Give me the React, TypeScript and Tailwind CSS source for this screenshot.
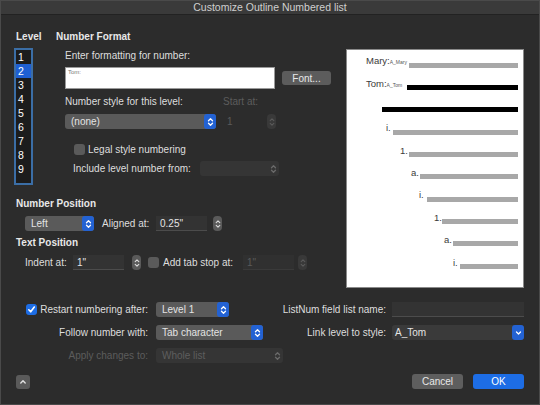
import React from "react";

function Arrows({ className = "" }: { className?: string }) {
  return (
    <svg width="7" height="10" viewBox="0 0 7 10" fill="none" stroke="currentColor" strokeWidth="1.3" strokeLinecap="round" strokeLinejoin="round" className={className}>
      <path d="M1.5 3.8 L3.5 1.8 L5.5 3.8" />
      <path d="M1.5 6.2 L3.5 8.2 L5.5 6.2" />
    </svg>
  );
}

function Popup({ label, w, disabled }: { label: string; w: string; disabled?: boolean }) {
  return (
    <div
      className={`${w} h-[15px] rounded-[3px] flex items-center justify-between shrink-0 ${
        disabled ? "bg-[#353535] text-[#5e5e5e]" : "bg-[#5a5a5a] text-[#e4e4e4]"
      }`}
    >
      <span className="pl-[6px] leading-none">{label}</span>
      {disabled ? (
        <div className="w-[12px] h-full flex items-center justify-center text-[#6a6a6a]">
          <Arrows />
        </div>
      ) : (
        <div className="w-[12px] h-full rounded-[3px] bg-[#2362d3] flex items-center justify-center text-white">
          <Arrows />
        </div>
      )}
    </div>
  );
}

function Stepper({ disabled }: { disabled?: boolean }) {
  return (
    <div
      className={`w-[9px] h-[15px] rounded-[4px] flex items-center justify-center shrink-0 ${
        disabled ? "bg-[#393939] text-[#5a5a5a]" : "bg-[#5a5a5a] text-[#dcdcdc]"
      }`}
    >
      <svg width="6" height="10" viewBox="0 0 6 10" fill="none" stroke="currentColor" strokeWidth="1.1" strokeLinecap="round" strokeLinejoin="round">
        <path d="M1.2 3.6 L3 1.8 L4.8 3.6" />
        <path d="M1.2 6.4 L3 8.2 L4.8 6.4" />
      </svg>
    </div>
  );
}

function Field({ value, w, disabled }: { value: string; w: string; disabled?: boolean }) {
  return (
    <div
      className={`${w} h-[15px] flex items-center pl-[4px] shrink-0 border-b ${
        disabled ? "bg-[#303030] border-[#3a3a3a] text-[#5a5a5a]" : "bg-[#333333] border-[#4c4c4c] text-[#e4e4e4]"
      }`}
    >
      {value}
    </div>
  );
}

function Checkbox({ checked }: { checked?: boolean }) {
  return checked ? (
    <div className="w-[11px] h-[11px] rounded-[3px] bg-[#1d6de5] flex items-center justify-center shrink-0">
      <svg width="9" height="9" viewBox="0 0 9 9" fill="none" stroke="white" strokeWidth="1.6" strokeLinecap="round" strokeLinejoin="round">
        <path d="M1.8 4.8 L3.7 6.8 L7.3 2" />
      </svg>
    </div>
  ) : (
    <div className="w-[11px] h-[11px] rounded-[3px] bg-[#5a5a5a] shrink-0" />
  );
}

const preview = [
  { pl: 19, tw: 43, text: "Mary:", sub: "A_Mary", black: false },
  { pl: 19, tw: 41, text: "Tom:", sub: "A_Tom", black: true },
  { pl: 35, tw: 0, text: "", sub: "", black: true },
  { pl: 39, tw: 7, text: "i.", sub: "", black: false },
  { pl: 53, tw: 9, text: "1.", sub: "", black: false },
  { pl: 64, tw: 9, text: "a.", sub: "", black: false },
  { pl: 72, tw: 8, text: "i.", sub: "", black: false },
  { pl: 87, tw: 8, text: "1.", sub: "", black: false },
  { pl: 97, tw: 9, text: "a.", sub: "", black: false },
  { pl: 106, tw: 7, text: "i.", sub: "", black: false },
];

export default function App() {
  return (
    <div className="w-[540px] h-[405px] bg-[#2c2c2c] border border-[#4a4a4a] text-[10px] text-[#dedede] font-['Liberation_Sans',Arial,sans-serif] antialiased overflow-hidden select-none">
      {/* Title bar */}
      <div className="h-[14px] bg-[#3a3a3a] border-b border-[#222] flex items-center justify-center text-[10.5px] text-[#cfcfcf]">
        Customize Outline Numbered list
      </div>

      {/* Top section */}
      <div className="flex pt-[16px] pr-[15px]">
        <div className="flex-1 pl-[13px]">
          <div className="flex">
            {/* Level */}
            <div className="w-[42px]">
              <div className="h-[12px] leading-[12px] font-bold text-[#e8e8e8] pl-[2px]">Level</div>
              <div className="mt-[5px] w-[19px] h-[137px] border-2 border-[#3b6ea6] bg-[#1c1c1c] text-[10.5px] text-white">
                {[1, 2, 3, 4, 5, 6, 7, 8, 9].map((n) => (
                  <div key={n} className={`h-[14px] leading-[14px] pl-[2px] ${n === 2 ? "bg-[#1f5fd2]" : ""}`}>
                    {n}
                  </div>
                ))}
              </div>
            </div>

            {/* Number Format */}
            <div className="flex-1">
              <div className="h-[12px] leading-[12px] font-bold text-[#e8e8e8]">Number Format</div>
              <div className="pl-[9px]">
                <div className="mt-[7px] h-[12px] leading-[12px]">Enter formatting for number:</div>
                <div className="mt-[5px] flex items-center">
                  <div className="w-[210px] h-[22px] bg-white border border-[#9a9a9a] text-[6px] text-[#777] pl-[2px] pt-[1px] leading-none">
                    Tom:
                  </div>
                  <div className="ml-[7px] w-[49px] h-[14px] rounded-[3px] bg-[#5c5c5c] text-[#e8e8e8] flex items-center justify-center">
                    Font...
                  </div>
                </div>
                <div className="mt-[7px] h-[12px] leading-[12px] flex">
                  <span className="w-[158px]">Number style for this level:</span>
                  <span className="text-[#5c5c5c]">Start at:</span>
                </div>
                <div className="mt-[6px] h-[15px] flex items-center">
                  <Popup label="(none)" w="w-[151px]" />
                  <div className="ml-[8px] w-[43px] h-[15px] pl-[3px] flex items-center text-[#5a5a5a]">1</div>
                  <Stepper disabled />
                </div>
                <div className="mt-[14px] h-[12px] flex items-center pl-[9px]">
                  <Checkbox />
                  <span className="ml-[3px]">Legal style numbering</span>
                </div>
                <div className="mt-[6px] h-[15px] flex items-center pl-[8px]">
                  <span className="w-[127px]">Include level number from:</span>
                  <Popup label="" w="w-[79px]" disabled />
                </div>
              </div>
            </div>
          </div>

          {/* Number Position */}
          <div className="mt-[13px] h-[12px] leading-[12px] font-bold text-[#e8e8e8] pl-[2px]">Number Position</div>
          <div className="mt-[6px] h-[15px] flex items-center pl-[11px]">
            <Popup label="Left" w="w-[69px]" />
            <span className="ml-[8px] w-[54px]">Aligned at:</span>
            <Field value={'0.25"'} w="w-[51px]" />
            <div className="ml-[6px]">
              <Stepper />
            </div>
          </div>

          {/* Text Position */}
          <div className="mt-[6px] h-[12px] leading-[12px] font-bold text-[#e8e8e8] pl-[2px]">Text Position</div>
          <div className="mt-[6px] h-[15px] flex items-center pl-[11px]">
            <span className="w-[48px]">Indent at:</span>
            <Field value={'1"'} w="w-[51px]" />
            <div className="ml-[8px]">
              <Stepper />
            </div>
            <div className="ml-[7px]">
              <Checkbox />
            </div>
            <span className="ml-[4px] w-[80px]">Add tab stop at:</span>
            <Field value={'1"'} w="w-[51px]" disabled />
            <div className="ml-[4px]">
              <Stepper disabled />
            </div>
          </div>
        </div>

        {/* Preview */}
        <div className="mt-[18px] w-[178px] h-[239px] bg-white border border-[#8a8a8a] pt-[4px] pr-[5px]">
          {preview.map((r, i) => (
            <div key={i} className="h-[22.35px] flex items-center" style={{ paddingLeft: r.pl }}>
              {r.tw > 0 && (
                <span
                  className="shrink-0 mb-[8px] text-[9.5px] leading-none text-[#3a3a3a] whitespace-nowrap"
                  style={{ width: r.tw }}
                >
                  {r.text}
                  {r.sub && <span className="text-[5px] text-[#555]">{r.sub}</span>}
                </span>
              )}
              <div className={`flex-1 ${r.black ? "h-[5px] bg-black" : "h-[5px] bg-[#a8a8a8]"}`} />
            </div>
          ))}
        </div>
      </div>

      {/* Bottom options */}
      <div className="mt-[14px] flex flex-col gap-[8px] pr-[15px]">
        <div className="h-[15px] flex items-center justify-between">
          <div className="flex items-center">
            <div className="w-[147px] flex items-center justify-end">
              <Checkbox checked />
              <span className="ml-[3px]">Restart numbering after:</span>
            </div>
            <div className="ml-[8px]">
              <Popup label="Level 1" w="w-[73px]" />
            </div>
          </div>
          <div className="flex items-center">
            <span>ListNum field list name:</span>
            <div className="ml-[6px] w-[132px] h-[15px] bg-[#333333] border-b border-[#4c4c4c]" />
          </div>
        </div>
        <div className="h-[15px] flex items-center justify-between">
          <div className="flex items-center">
            <div className="w-[147px] text-right">Follow number with:</div>
            <div className="ml-[8px]">
              <Popup label="Tab character" w="w-[107px]" />
            </div>
          </div>
          <div className="flex items-center">
            <span>Link level to style:</span>
            <div className="ml-[6px] w-[132px] h-[15px] rounded-[3px] bg-[#3a3a3a] flex items-center justify-between text-[#e4e4e4]">
              <span className="pl-[3px]">A_Tom</span>
              <div className="w-[12px] h-full rounded-[3px] bg-[#2362d3] flex items-center justify-center text-white">
                <svg width="7" height="6" viewBox="0 0 7 6" fill="none" stroke="currentColor" strokeWidth="1.3" strokeLinecap="round" strokeLinejoin="round">
                  <path d="M1.5 2 L3.5 4 L5.5 2" />
                </svg>
              </div>
            </div>
          </div>
        </div>
        <div className="h-[15px] flex items-center">
          <div className="w-[147px] text-right text-[#5c5c5c]">Apply changes to:</div>
          <div className="ml-[8px]">
            <Popup label="Whole list" w="w-[127px]" disabled />
          </div>
        </div>
      </div>

      {/* Footer */}
      <div className="mt-[11px] flex items-center justify-between pl-[15px] pr-[15px]">
        <div className="w-[14px] h-[14px] rounded-[3px] bg-[#5a5a5a] flex items-center justify-center text-[#e0e0e0]">
          <svg width="8" height="6" viewBox="0 0 8 6" fill="none" stroke="currentColor" strokeWidth="1.4" strokeLinecap="round" strokeLinejoin="round">
            <path d="M1.8 4 L4 1.8 L6.2 4" />
          </svg>
        </div>
        <div className="flex items-center gap-[10px]">
          <div className="w-[51px] h-[15px] rounded-[3px] bg-[#5e5e5e] text-[#e8e8e8] flex items-center justify-center">Cancel</div>
          <div className="w-[51px] h-[15px] rounded-[3px] bg-[#1d6de5] text-white flex items-center justify-center">OK</div>
        </div>
      </div>
    </div>
  );
}
